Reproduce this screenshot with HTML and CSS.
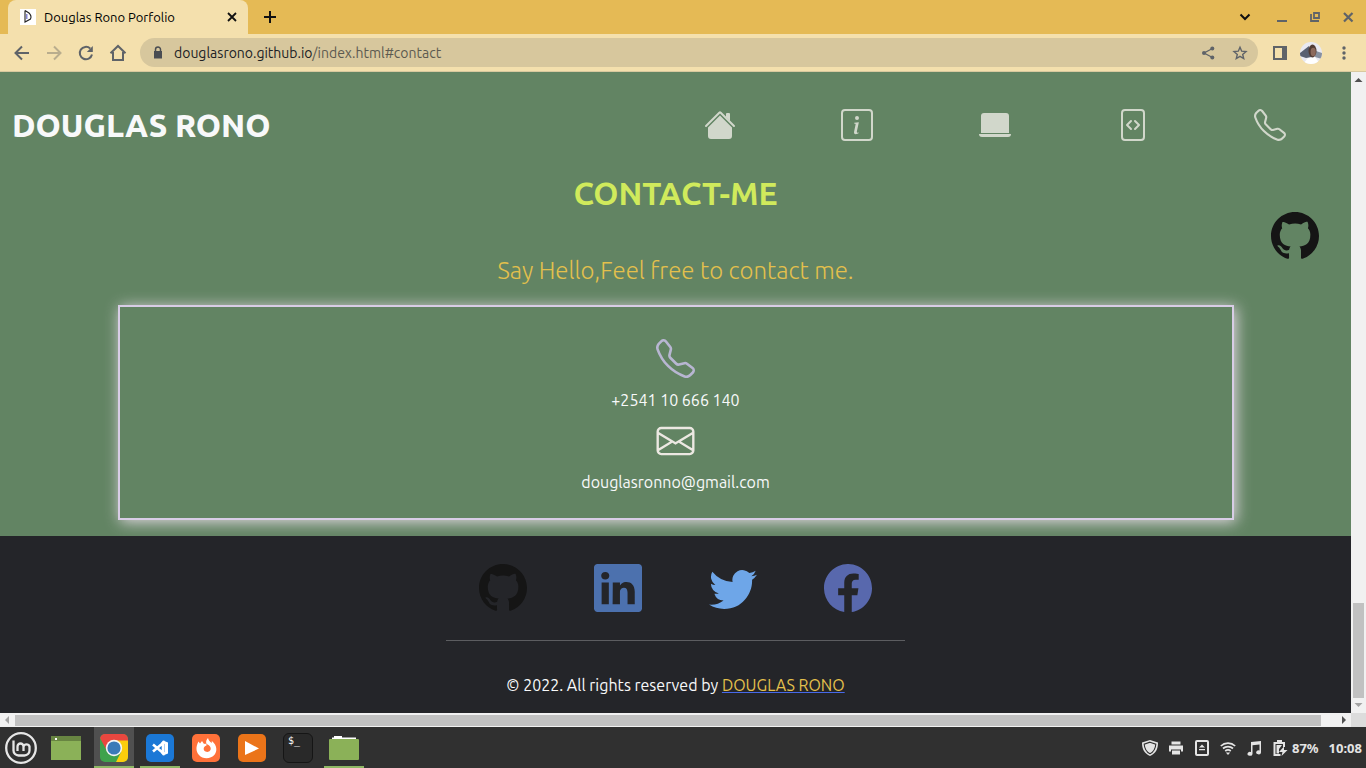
FILE: index.html
```html
<!DOCTYPE html>
<html lang="en">
<head>
<meta charset="utf-8">
<meta name="viewport" content="width=device-width, initial-scale=1">
<title>Douglas Rono Porfolio</title>
<link rel="stylesheet" href="styles.css">
</head>
<body>
<div class="tabstrip">
  <div class="tab">
    <svg class="favicon" viewBox="0 0 16 16" aria-hidden="true"><path fill="#fff" d="M0 0h16v16H0z"/><path d="M5 1.500v11.500l5.500-3q1.500-3-1.500-6L5 1.500" fill="none" stroke="#222" stroke-width="1.100"/><path d="M6.800 5v5" stroke="#6a6ac8" stroke-width="1.200"/></svg>
    <span class="tab-title">Douglas Rono Porfolio</span>
    <button class="plain" aria-label="Close tab"><svg width="16" height="16" viewBox="0 0 16 16"><path d="M4 4l8 8M12 4l-8 8" stroke="#111" stroke-width="1.800"/></svg></button>
  </div>
  <button class="plain new-tab" aria-label="New tab"><svg width="16" height="16" viewBox="0 0 16 16"><path d="M8 2v12M2 8h12" stroke="#111" stroke-width="2"/></svg></button>
  <div class="window-buttons">
    <button class="plain search-tabs" aria-label="Search tabs"><svg width="16" height="16" viewBox="0 0 16 16"><path d="M3.500 5.500L8 10l4.500-4.500" fill="none" stroke="#111" stroke-width="2"/></svg></button>
    <button class="plain" aria-label="Minimize"><svg width="16" height="16" viewBox="0 0 16 16"><path d="M3 12h10" stroke="#5f6368" stroke-width="2"/></svg></button>
    <button class="plain" aria-label="Restore"><svg width="16" height="16" viewBox="0 0 16 16"><path d="M7 4h5v5H7zM4 5v7h8" fill="none" stroke="#5f6368" stroke-width="1.800"/></svg></button>
    <button class="plain" aria-label="Close window"><svg width="16" height="16" viewBox="0 0 16 16"><path d="M4 4l8.500 8.500M12.500 4L4 12.500" stroke="#5f6368" stroke-width="2.200"/></svg></button>
  </div>
</div>
<div class="toolbar">
  <button class="plain" aria-label="Back"><svg width="20" height="20" viewBox="0 0 20 20"><path d="M17 10H4M10 3.500L3.500 10l6.500 6.500" fill="none" stroke="#5f6368" stroke-width="2"/></svg></button>
  <button class="plain" aria-label="Forward"><svg width="20" height="20" viewBox="0 0 20 20"><path d="M3 10h13M10 3.500l6.500 6.500-6.500 6.500" fill="none" stroke="#b9ad8d" stroke-width="2"/></svg></button>
  <button class="plain" aria-label="Reload"><svg width="20" height="20" viewBox="0 0 20 20"><path d="M16 11.500a6.200 6.200 0 1 1-1.800-6" fill="none" stroke="#5f6368" stroke-width="2"/><path d="M16.800 3v6h-6z" fill="#5f6368"/></svg></button>
  <button class="plain" aria-label="Home"><svg width="20" height="20" viewBox="0 0 20 20"><path d="M2.500 10.200L10 3l7.500 7.200M5 9v8h10V9" fill="none" stroke="#5f6368" stroke-width="2"/></svg></button>
  <div class="omnibox">
    <svg width="16" height="16" viewBox="0 0 16 16" aria-hidden="true"><path d="M4 6h8v7.500H4z" fill="#4a4d52"/><path d="M5.500 6V4.500a2.500 2.500 0 0 1 5 0V6" fill="none" stroke="#4a4d52" stroke-width="1.500"/></svg>
    <span class="url">douglasrono.github.io<span class="url-path">/index.html#contact</span></span>
    <button class="plain" aria-label="Share"><svg width="16" height="16" viewBox="0 0 16 16"><path d="M12.500 3.500L4 8l8.500 4.500" fill="none" stroke="#5f6368" stroke-width="1.300"/><circle cx="4" cy="8" r="2" fill="#5f6368"/><circle cx="12.300" cy="3.400" r="2" fill="#5f6368"/><circle cx="12.300" cy="12.600" r="2" fill="#5f6368"/></svg></button>
    <button class="plain" aria-label="Bookmark"><svg width="16" height="16" viewBox="0 0 16 16"><path d="M8 2.200l1.700 4 4.300.400-3.300 2.800 1 4.200L8 11.300l-3.700 2.300 1-4.200L2 6.600l4.300-.400z" fill="none" stroke="#5f6368" stroke-width="1.400"/></svg></button>
  </div>
  <button class="plain" aria-label="Side panel"><svg width="16" height="16" viewBox="0 0 16 16"><path d="M2 2h12v12H2z" fill="none" stroke="#5f6368" stroke-width="2"/><path d="M10 2h5v12h-5z" fill="#5f6368"/></svg></button>
  <button class="plain profile" aria-label="Profile"><svg width="22" height="22" viewBox="0 0 22 22"><defs><clipPath id="round"><circle cx="11" cy="11" r="11"/></clipPath></defs><g clip-path="url(#round)"><path fill="#e9e9f2" d="M0 0h22v22H0z"/><path fill="#596071" d="M0 11l9-7 3 11-6 1-6-2z"/><path fill="#8790a0" d="M16 9l6 2v6l-7-2z"/><path fill="#fff" d="M3 22l5-6 7-1 5 7z"/><ellipse cx="12.500" cy="9" rx="4" ry="6.500" fill="#513b34"/><ellipse cx="13.200" cy="10" rx="2.600" ry="4.200" fill="#8c695c"/></g></svg></button>
  <button class="plain" aria-label="Menu"><svg width="16" height="16" viewBox="0 0 16 16" fill="#5f6368"><circle cx="8" cy="3" r="1.700"/><circle cx="8" cy="8" r="1.700"/><circle cx="8" cy="13" r="1.700"/></svg></button>
</div>
<div class="viewport">
  <div class="page">
    <a class="floating" href="#github" aria-label="GitHub profile"><svg width="48" height="48" viewBox="0 0 16 16" fill="currentColor"><use href="#i-github"/></svg></a>
    <header class="site-header">
      <a class="brand" href="#home">DOUGLAS RONO</a>
      <nav class="site-nav">
        <a href="#home" aria-label="Home"><svg width="32" height="32" viewBox="0 0 16 16" fill="currentColor"><path d="m8 3.293 6 6V13.500a1.500 1.500 0 0 1-1.500 1.500h-9A1.500 1.500 0 0 1 2 13.500V9.293l6-6zm5-.793V6l-2-2V2.500a.5.5 0 0 1 .5-.5h1a.5.5 0 0 1 .5.5z"/><path d="M7.293 1.500a1 1 0 0 1 1.414 0l6.647 6.646a.5.5 0 0 1-.708.708L8 2.207 1.354 8.854a.5.5 0 1 1-.708-.708L7.293 1.500z"/></svg></a>
        <a href="#about" aria-label="About"><svg width="32" height="32" viewBox="0 0 16 16" fill="currentColor"><path d="M14 1a1 1 0 0 1 1 1v12a1 1 0 0 1-1 1H2a1 1 0 0 1-1-1V2a1 1 0 0 1 1-1h12zM2 0a2 2 0 0 0-2 2v12a2 2 0 0 0 2 2h12a2 2 0 0 0 2-2V2a2 2 0 0 0-2-2H2z"/><path d="m8.930 6.588-2.290.287-.082.380.450.083c.294.070.352.176.288.469l-.738 3.468c-.194.897.105 1.319.808 1.319.545 0 1.178-.252 1.465-.598l.088-.416c-.2.176-.492.246-.686.246-.275 0-.375-.193-.304-.533L8.930 6.588zM9 4.500a1 1 0 1 1-2 0 1 1 0 0 1 2 0z"/></svg></a>
        <a href="#projects" aria-label="Projects"><svg width="32" height="32" viewBox="0 0 16 16" fill="currentColor"><path d="M2.500 2A1.500 1.500 0 0 0 1 3.500V12h14V3.500A1.500 1.500 0 0 0 13.500 2h-11zM0 12.500h16a1.500 1.500 0 0 1-1.500 1.500h-13A1.500 1.500 0 0 1 0 12.500z"/></svg></a>
        <a href="#skills" aria-label="Skills"><svg width="32" height="32" viewBox="0 0 16 16" fill="currentColor"><path d="M6.646 5.646a.5.5 0 1 1 .708.708L5.707 8l1.647 1.646a.5.5 0 0 1-.708.708l-2-2a.5.5 0 0 1 0-.708l2-2zm2.708 0a.5.5 0 1 0-.708.708L10.293 8 8.646 9.646a.5.5 0 0 0 .708.708l2-2a.5.5 0 0 0 0-.708l-2-2z"/><path d="M2 2a2 2 0 0 1 2-2h8a2 2 0 0 1 2 2v12a2 2 0 0 1-2 2H4a2 2 0 0 1-2-2V2zm10-1H4a1 1 0 0 0-1 1v12a1 1 0 0 0 1 1h8a1 1 0 0 0 1-1V2a1 1 0 0 0-1-1z"/></svg></a>
        <a href="#contact" aria-label="Contact"><svg width="32" height="32" viewBox="0 0 16 16" fill="currentColor"><path id="i-phone" d="M3.654 1.328a.678.678 0 0 0-1.015-.063L1.605 2.300c-.483.484-.661 1.169-.450 1.770a17.568 17.568 0 0 0 4.168 6.608 17.569 17.569 0 0 0 6.608 4.168c.601.211 1.286.033 1.770-.450l1.034-1.034a.678.678 0 0 0-.063-1.015l-2.307-1.794a.678.678 0 0 0-.580-.122l-2.190.547a1.745 1.745 0 0 1-1.657-.459L5.482 8.062a1.745 1.745 0 0 1-.460-1.657l.548-2.190a.678.678 0 0 0-.122-.580L3.654 1.328zM1.884.511a1.745 1.745 0 0 1 2.612.163L6.290 2.980c.329.423.445.974.315 1.494l-.547 2.190a.678.678 0 0 0 .178.643l2.457 2.457a.678.678 0 0 0 .644.178l2.189-.547a1.745 1.745 0 0 1 1.494.315l2.306 1.794c.829.645.905 1.870.163 2.611l-1.034 1.034c-.740.740-1.846 1.065-2.877.702a18.634 18.634 0 0 1-7.010-4.420 18.634 18.634 0 0 1-4.420-7.009c-.362-1.030-.037-2.137.703-2.877L1.885.511z"/></svg></a>
      </nav>
    </header>
    <main class="contact" id="contact">
      <h1>CONTACT-ME</h1>
      <p class="lead">Say Hello,Feel free to contact me.</p>
      <section class="card">
        <svg class="phone" width="39" height="39" viewBox="0 0 16 16" fill="currentColor" aria-hidden="true"><use href="#i-phone"/></svg>
        <p>+2541 10 666 140</p>
        <svg class="mail" width="39" height="38" viewBox="0 0 16 16" fill="currentColor" aria-hidden="true"><path d="M0 4a2 2 0 0 1 2-2h12a2 2 0 0 1 2 2v8a2 2 0 0 1-2 2H2a2 2 0 0 1-2-2V4zm2-1a1 1 0 0 0-1 1v.217l7 4.200 7-4.200V4a1 1 0 0 0-1-1H2zm13 2.383-4.708 2.825L15 11.105V5.383zm-.034 6.876-5.640-3.471L8 9.583l-1.326-.795-5.640 3.470A1 1 0 0 0 2 13h12a1 1 0 0 0 .966-.741zM1 11.105l4.708-2.897L1 5.383v5.722z"/></svg>
        <p>douglasronno@gmail.com</p>
      </section>
    </main>
    <footer class="site-footer">
      <div class="social">
        <a class="github" href="#github" aria-label="GitHub"><svg width="48" height="48" viewBox="0 0 16 16" fill="currentColor"><path id="i-github" d="M8 0C3.580 0 0 3.580 0 8c0 3.540 2.290 6.530 5.470 7.590.4.070.550-.170.550-.380 0-.190-.010-.820-.010-1.490-2.010.370-2.530-.490-2.690-.940-.090-.230-.480-.940-.820-1.130-.280-.150-.680-.520-.010-.530.630-.010 1.080.580 1.230.820.720 1.210 1.870.870 2.330.660.070-.520.280-.870.510-1.070-1.780-.2-3.640-.890-3.640-3.950 0-.870.310-1.590.820-2.150-.080-.2-.360-1.020.080-2.120 0 0 .670-.210 2.200.820.640-.180 1.320-.270 2-.270.680 0 1.360.090 2 .270 1.530-1.040 2.200-.820 2.200-.820.440 1.100.160 1.920.080 2.120.510.560.820 1.270.820 2.150 0 3.070-1.870 3.750-3.650 3.950.290.250.540.730.540 1.480 0 1.070-.010 1.930-.010 2.200 0 .210.150.460.550.380A8.012 8.012 0 0 0 16 8c0-4.420-3.580-8-8-8z"/></svg></a>
        <a class="linkedin" href="#linkedin" aria-label="LinkedIn"><svg width="48" height="48" viewBox="0 0 16 16" fill="currentColor"><path d="M0 1.146C0 .513.526 0 1.175 0h13.650C15.474 0 16 .513 16 1.146v13.708c0 .633-.526 1.146-1.175 1.146H1.175C.526 16 0 15.487 0 14.854V1.146zm4.943 12.248V6.169H2.542v7.225h2.401zm-1.200-8.212c.837 0 1.358-.554 1.358-1.248-.015-.709-.520-1.248-1.342-1.248-.822 0-1.359.540-1.359 1.248 0 .694.521 1.248 1.327 1.248h.016zm4.908 8.212V9.359c0-.216.016-.432.080-.586.173-.431.568-.878 1.232-.878.869 0 1.216.662 1.216 1.634v3.865h2.401V9.250c0-2.220-1.184-3.252-2.764-3.252-1.274 0-1.845.7-2.165 1.193v.025h-.016a5.540 5.540 0 0 1 .016-.025V6.169h-2.400c.030.678 0 7.225 0 7.225h2.400z"/></svg></a>
        <a class="twitter" href="#twitter" aria-label="Twitter"><svg width="48" height="48" viewBox="0 0 16 16" fill="currentColor"><path d="M5.026 15c6.038 0 9.341-5.003 9.341-9.334 0-.140 0-.282-.006-.422A6.685 6.685 0 0 0 16 3.542a6.658 6.658 0 0 1-1.889.518 3.301 3.301 0 0 0 1.447-1.817 6.533 6.533 0 0 1-2.087.793A3.286 3.286 0 0 0 7.875 6.030a9.325 9.325 0 0 1-6.767-3.429 3.289 3.289 0 0 0 1.018 4.382A3.323 3.323 0 0 1 .640 6.575v.045a3.288 3.288 0 0 0 2.632 3.218 3.203 3.203 0 0 1-.865.115 3.230 3.230 0 0 1-.614-.057 3.283 3.283 0 0 0 3.067 2.277A6.588 6.588 0 0 1 .780 13.580a6.320 6.320 0 0 1-.780-.045A9.344 9.344 0 0 0 5.026 15z"/></svg></a>
        <a class="facebook" href="#facebook" aria-label="Facebook"><svg width="48" height="48" viewBox="0 0 16 16" fill="currentColor"><path d="M16 8.049c0-4.446-3.582-8.050-8-8.050C3.580 0-.002 3.603-.002 8.050c0 4.017 2.926 7.347 6.750 7.951v-5.625h-2.030V8.050H6.750V6.275c0-2.017 1.195-3.131 3.022-3.131.876 0 1.791.157 1.791.157v1.980h-1.009c-.993 0-1.303.621-1.303 1.258v1.510h2.218l-.354 2.326H9.250V16c3.824-.604 6.750-3.934 6.750-7.951z"/></svg></a>
      </div>
      <hr>
      <p>© 2022. All rights reserved by <a href="#home">DOUGLAS RONO</a></p>
    </footer>
  </div>
  <div class="scroll-y" aria-hidden="true">
    <svg width="15" height="15" viewBox="0 0 15 15"><path d="M3.500 10h8l-4-4z" fill="#505050"/></svg>
    <div class="track-y"></div>
    <div class="thumb-y"></div>
    <svg width="15" height="15" viewBox="0 0 15 15"><path d="M3.500 5h8l-4 4z" fill="#a3a3a3"/></svg>
  </div>
  <div class="scroll-x" aria-hidden="true">
    <svg width="15" height="14" viewBox="0 0 15 14"><path d="M9 3v8L5 7z" fill="#a3a3a3"/></svg>
    <div class="thumb-x"></div>
    <svg width="15" height="14" viewBox="0 0 15 14"><path d="M6 3v8l4-4z" fill="#505050"/></svg>
  </div>
  <div class="corner"></div>
</div>
<div class="taskbar">
  <div class="launchers">
    <button class="plain task" aria-label="Menu"><svg width="32" height="32" viewBox="0 0 32 32" fill="none" stroke="#e6e6e6"><circle cx="16" cy="16" r="14.800" stroke-width="2.300"/><path d="M8.500 8.500v10a5 5 0 0 0 5 5h6a5 5 0 0 0 5-5v-4a3.200 3.200 0 0 0-6 0V19m0-4.500a3 3 0 0 0-6 0V19" stroke-width="2.300"/></svg></button>
    <button class="plain task" aria-label="Show desktop"><svg width="30" height="24" viewBox="0 0 30 24"><path fill="#8bb158" d="M0 0h30v24H0z"/><path fill="#688542" d="M0 0h30v5H0z"/><path fill="#fff" d="M4 2h2v2H4z"/></svg></button>
  </div>
  <div class="windows">
    <button class="plain task active open" aria-label="Chrome"><svg width="28" height="28" viewBox="0 0 28 28"><defs><clipPath id="tile"><rect width="28" height="28" rx="5"/></clipPath></defs><g clip-path="url(#tile)"><path fill="#3fa24c" d="M0 0h28v28H0z"/><path fill="#fbcd0c" d="M14 6h14v22H16l5-10z"/><path fill="#e9473f" d="M0 0h28v6.500H14L7 17 0 4z"/></g><circle cx="14" cy="14" r="8.200" fill="#f5f5f5"/><circle cx="14" cy="14" r="6.600" fill="#3b7ab8"/></svg></button>
    <button class="plain task open" aria-label="Visual Studio Code"><svg width="28" height="28" viewBox="0 0 28 28"><rect width="28" height="28" rx="5" fill="#1b78d6"/><path d="M7 10.500l10 8.500V9L7 17.500" fill="none" stroke="#fff" stroke-width="2.600"/><path d="M17 6.500l5 2v11l-5 2-2-2.500 3.500-1v-8L15 9z" fill="#fff"/></svg></button>
    <button class="plain task" aria-label="Firefox"><svg width="28" height="28" viewBox="0 0 28 28"><rect width="28" height="28" rx="5" fill="#ff7139"/><path fill="#fff" d="M16 4c1 3 1.500 3 3.500 5 .5-1 .4-1.500.2-2.200 6 5 5.300 11 3 13.700-4 5-12 5-15.700.5-3-3.500-3.500-8-.5-13.500l1.500 2L10 7l2 3c3-1 2.500 1 2.500 1.500-3.500 1-3.500 5-1 6 3 1.500 6-1 5-4-.5-2-2.500-3-4-3.500C13.500 7.500 14.500 5.500 16 4z"/></svg></button>
    <button class="plain task" aria-label="Media player"><svg width="28" height="28" viewBox="0 0 28 28"><rect width="28" height="28" rx="5" fill="#eb7419"/><path fill="#fff" d="M7 7l14 7.500L7 21z"/></svg></button>
    <button class="plain task" aria-label="Terminal"><span class="terminal">$_</span></button>
    <button class="plain task open" aria-label="Files"><svg width="30" height="26" viewBox="0 0 30 26"><path d="M3 5V2.500h2V1h8v1.500h14V5" fill="#fff"/><rect y="4" width="30" height="21" rx="1" fill="#8bb158"/></svg></button>
  </div>
  <div class="tray">
    <svg viewBox="0 0 16 16"><path d="M8 0l8 2.500c0 7-2.500 11-8 13.500C2.500 13.500 0 9.500 0 2.500z" fill="#e4e4e4"/><path d="M8 2.200l5.800 2c-.3 4.800-2 7.500-5.800 9.600-3.800-2.100-5.500-4.800-5.800-9.600z" fill="none" stroke="#303030" stroke-width="1.100"/></svg>
    <svg viewBox="0 0 16 16" fill="#e4e4e4"><path d="M3.500 1.500h9v3h-9zM1 5.500h14v6h-2v-2H3v2H1zM4 10.500h8v4H4z"/></svg>
    <svg viewBox="0 0 16 16"><rect x="2" y="1" width="12" height="14" rx="1" fill="none" stroke="#e4e4e4" stroke-width="2"/><path d="M5 7.500h6L8 4.500zM5 9h6v1.300H5z" fill="#e4e4e4"/></svg>
    <svg viewBox="0 0 16 16" fill="none" stroke="#e4e4e4" stroke-width="1.700"><path d="M.8 6a10.500 10.500 0 0 1 14.400 0M3 8.500a7.500 7.500 0 0 1 10 0M5.200 11a4.300 4.300 0 0 1 5.600 0"/><path d="M8 15l-2.200-2.500h4.400z" fill="#e4e4e4" stroke="none"/></svg>
    <svg viewBox="0 0 16 16" fill="#e4e4e4"><path d="M5 2l10-1v11.500a2.400 2 0 1 1-1.500-2V4.500l-7 .7V14a2.500 2 0 1 1-1.500-2z"/></svg>
    <svg viewBox="0 0 16 16"><path d="M8.500 15H2.500V3H12v4M5 1h5" fill="none" stroke="#e4e4e4" stroke-width="2"/><path d="M4.500 5h5.500L7 9v4.500H4.500zM12 6.500l-5 5.500h3.500l-1 4 6-6h-3.500z" fill="#e4e4e4"/></svg>
    <span class="battery">87%</span>
    <time>10:08</time>
  </div>
</div>
</body>
</html>
```
FILE: styles.css
```css
* { box-sizing: border-box; }

body {
  margin: 0;
  min-height: 100vh;
  display: grid;
  grid-template-rows: 34px 38px 1fr 41px;
  font-family: Ubuntu, "Noto Sans", sans-serif;
  font-size: 16px;
  line-height: 24px;
  color: #f8f9fa;
}

svg { display: block; flex: none; }
a { color: inherit; }
p, h1 { margin: 0; }

.plain {
  display: grid;
  place-items: center;
  padding: 0;
  border: 0;
  background: none;
  color: inherit;
  font: inherit;
}

/* Browser frame */
.tabstrip {
  display: flex;
  align-items: center;
  padding: 0 10px 0 8px;
  background: #e5ba55;
}

.tab {
  display: flex;
  align-items: center;
  align-self: stretch;
  width: 240px;
  padding: 0 8px 0 12px;
  gap: 8px;
  border-radius: 8px 8px 0 0;
  background: #f4e0ad;
  color: #000;
}

.favicon { width: 16px; height: 16px; }
.tab-title { flex: 1; font-size: 13px; white-space: nowrap; }
.new-tab { margin-left: 14px; }
.window-buttons { display: flex; gap: 17px; margin-left: auto; }
.search-tabs { margin-right: 4px; }

.toolbar {
  display: flex;
  align-items: center;
  gap: 12px;
  padding: 0 14px 0 12px;
  border-bottom: 1px solid #d8c99f;
  background: #f4e0ad;
}

.omnibox {
  display: flex;
  flex: 1;
  align-items: center;
  height: 29px;
  gap: 16px;
  padding: 0 10px;
  border-radius: 15px;
  background: #d7c79d;
}

.omnibox > svg { margin-right: -8px; }
.url { flex: 1; font-size: 14px; color: #202124; }
.url-path { color: #5c5a50; }
.omnibox + .plain { margin-left: 2px; }
.profile { margin-right: 2px; }

.viewport {
  display: grid;
  grid-template-columns: minmax(0, 1fr) 15px;
  grid-template-rows: 1fr 14px;
}

/* Portfolio page */
.page {
  position: relative;
  display: flex;
  flex-direction: column;
  background: #628463;
}

.site-header {
  display: flex;
  align-items: center;
  justify-content: space-between;
  padding: 29px 12px 0;
}

.brand {
  font-size: 32px;
  font-weight: 800;
  line-height: 48px;
  text-decoration: none;
}

.site-nav {
  display: grid;
  grid-template-columns: repeat(5, 1fr);
  justify-items: center;
  flex: 0 1 688px;
  color: #d1d7cb;
}

.floating {
  position: absolute;
  top: 140px;
  right: 32px;
  color: #151515;
}

.contact {
  display: flex;
  flex-direction: column;
  align-items: center;
  padding: 24px 12px 16px;
  text-align: center;
}

.contact h1 {
  font-size: 32px;
  font-weight: 600;
  line-height: 40px;
  color: #d0ea5c;
}

.lead {
  margin-top: 40px;
  font-size: 24px;
  font-weight: 300;
  line-height: 36px;
  color: #e4c04c;
}

.card {
  display: flex;
  flex-direction: column;
  align-items: center;
  width: 100%;
  max-width: 1116px;
  margin-top: 16px;
  padding: 32px 16px 14px;
  border: 2px solid #d8cde6;
  box-shadow: 2px 2px 14px #e3d9e3;
}

.card p { margin: 10px 0; }
.phone { color: #b8b6d2; }
.mail { color: #ece8e2; }

.site-footer {
  display: flex;
  flex: 1;
  flex-direction: column;
  align-items: center;
  padding: 28px 0 16px;
  background: #242529;
}

.social {
  display: flex;
  justify-content: space-around;
  width: 34%;
}

.github { color: #151515; }
.linkedin { color: #4c71ae; }
.twitter { color: #6ea6e8; }
.facebook { color: #5868ad; }

.site-footer hr {
  width: 34%;
  margin: 28px 0 32px;
  border: 0;
  border-top: 1px solid #5c5d60;
}

.site-footer p a {
  color: #e4c04c;
  text-decoration-color: #4769e8;
}

/* Scroll bars */
.scroll-y {
  display: flex;
  flex-direction: column;
  background: #f1f1f1;
}

.track-y { flex: 516; }
.thumb-y { flex: 95; margin: 0 2px; background: #c1c1c1; }

.scroll-x {
  display: flex;
  background: #f1f1f1;
}

.thumb-x { flex: 1; margin: 2px 15px 1px 0; background: #c1c1c1; }
.corner { background: #dcdcdc; }

/* Desktop panel */
.taskbar {
  display: flex;
  align-items: stretch;
  padding: 0 4px 0 1px;
  background: #303030;
}

.launchers, .windows { display: flex; }
.launchers { gap: 5px; margin-right: 8px; }
.windows { gap: 6px; }
.task { width: 40px; border-block: 2px solid transparent; }
.active { background-color: #505050; }
.open { border-bottom-color: #8fb765; }

.terminal {
  width: 30px;
  height: 30px;
  padding-left: 4px;
  border: 1px solid #151515;
  border-radius: 6px;
  background: #292929;
  font: 10px/14px "DejaVu Sans Mono", monospace;
  text-align: left;
}

.tray {
  display: flex;
  align-items: center;
  gap: 10px;
  margin-left: auto;
  font-family: "Noto Sans", sans-serif;
  font-size: 13px;
  font-weight: 700;
  color: #e4e4e4;
}

.tray svg { width: 16px; height: 16px; }
.battery { margin: 0 0 0 -6px; }
```
